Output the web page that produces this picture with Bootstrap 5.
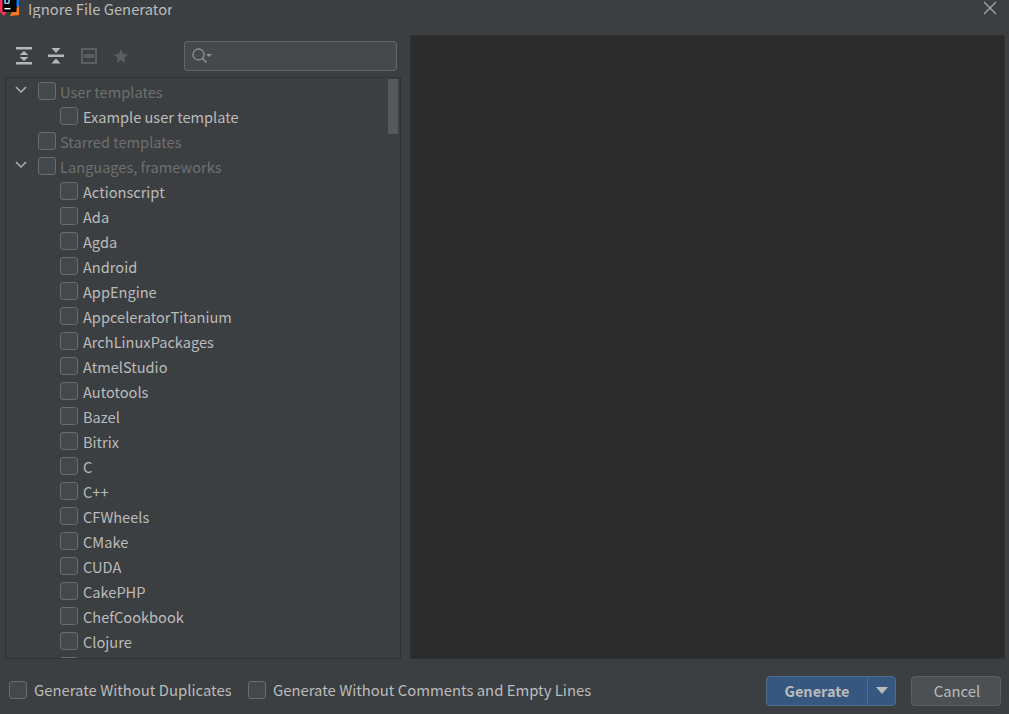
<!DOCTYPE html>
<html lang="en">
<head>
<meta charset="utf-8">
<title>Ignore File Generator</title>
<link href="https://cdn.jsdelivr.net/npm/bootstrap@5.3.0/dist/css/bootstrap.min.css" rel="stylesheet">
<style>
html,body{height:100%;margin:0;overflow:hidden}
body{background:#3c3f41;color:#bbb;font-family:"Noto Sans CJK KR","Noto Sans",sans-serif;font-size:14.6px}
.dlg{width:1009px;height:714px}
.titlebar{height:35px;flex:none;position:relative}
.appicon{margin-top:-4px;flex:none}
.dlgtitle{margin-left:9px;width:144px;overflow:hidden;white-space:nowrap;line-height:18px;font-size:14.8px}
.closex{position:absolute;left:983px;top:1px}
.mainrow{height:624px;flex:none}
.leftpane{width:410px;flex:none}
.tools{height:42px;padding-left:14px}
.tbtn{width:20px;height:20px;margin-right:12px;display:block}
.searchbox{width:213px;height:30px;margin-left:42px;background:#45494a;border:1px solid #646464;border-radius:3px;padding-left:6px}
.treewrap{width:396px;height:582px;margin-left:5px;padding-top:1px;border:1px solid #323232;overflow:hidden;position:relative}
.trow{height:25px;white-space:nowrap;color:#bbb;line-height:25px;position:relative}
.lvl0{padding-left:32px}
.lvl1{padding-left:54px}
.muted{color:#6f6f6f}
.cbx{width:18px;height:18px;border:1px solid #6b6b6b;border-radius:3px;background:#43494a;flex:none;margin-right:5px;display:block;margin-top:-2px}
.lvl0 .cbx{margin-right:4px}
.chev{position:absolute;left:9px;top:7px}
.sbar{position:absolute;left:382px;top:1px;width:10px;height:55px;background:#575859}
.preview{width:595px;height:624px;background:#2b2b2b;border:1px solid #323232}
.foot{height:55px;padding-left:9px;padding-right:8px;padding-top:8px;font-size:14.85px}
.foot .cbx{margin-right:7px}
.chk1{width:197px;overflow:hidden;white-space:nowrap}
.chk2{margin-left:17px}
.gen{margin-left:auto;width:130px;height:30px;background:#365880;border:1px solid #4c708c;border-radius:4px;color:#bbb}
.genlbl{width:100px;text-align:center;font-weight:700;line-height:28px;font-size:14.5px}
.gensep{width:1px;height:28px;background:#4c708c}
.genarr{flex:1}
.cancel{margin-left:15px;width:90px;height:30px;background:#4c5052;border:1px solid #5e6060;border-radius:4px;color:#bbb;text-align:center;line-height:28px;padding-left:2px}
</style>
</head>
<body>
<div class="dlg d-flex flex-column">
  <div class="titlebar d-flex align-items-start">
    <svg class="appicon" width="19" height="21" viewBox="0 0 19 21" aria-hidden="true">
      <path d="M0 4 L7 1 L12 8 L4 20 L0 16Z" fill="#fe315d"/>
      <path d="M7 1 L19 1 L19 12 L12 8Z" fill="#087cfa"/>
      <path d="M12 16 L19 10 L19 19 L10 20Z" fill="#f97a12"/>
      <rect x="2.500" y="0" width="14" height="16" fill="#000"/>
      <rect x="4.500" y="12" width="6" height="1.400" fill="#fff"/>
      <text x="4" y="8" font-size="7" font-weight="700" fill="#fff" font-family="Liberation Sans,sans-serif">IJ</text>
    </svg>
    <div class="dlgtitle">Ignore File Generator</div>
    <svg class="closex" width="14" height="14" viewBox="0 0 14 14" aria-hidden="true"><path d="M1 1L13 13M13 1L1 13" stroke="#a9a9a9" stroke-width="1.200" fill="none"/></svg>
  </div>
  <div class="mainrow d-flex">
    <div class="leftpane d-flex flex-column">
      <div class="tools d-flex align-items-center">
        <svg class="tbtn" viewBox="0 0 20 20" aria-hidden="true"><path d="M2 1h16v2.500H2zM2 16h16v2.500H2zM10 5l4.500 4h-9zM5.500 11h9L10 15z" fill="#b4b6b7"/></svg>
        <svg class="tbtn" viewBox="0 0 20 20" aria-hidden="true"><path d="M2 8.500h16v2.500H2zM5.500 2h9L10 7zM10 12.500l4.500 5h-9z" fill="#b4b6b7"/></svg>
        <svg class="tbtn" viewBox="0 0 20 20" aria-hidden="true"><path d="M4 3h14v14H4zM7 9h8v2H7z" fill="none" stroke="#5c5f61" stroke-width="2"/></svg>
        <svg class="tbtn" viewBox="0 0 20 20" aria-hidden="true"><path d="M11 3l2 4.800 5 .6-3.700 3.300 1 5.100L11 14.300l-4.300 2.500 1-5.100L4 8.400l5-.6z" fill="#5c5f61"/></svg>
        <div class="searchbox d-flex align-items-center">
          <svg width="24" height="20" viewBox="0 0 24 20" aria-hidden="true"><circle cx="7.500" cy="8.500" r="5.500" fill="none" stroke="#8c9092" stroke-width="1.300"/><path d="M11.500 12.500l4 4" stroke="#8c9092" stroke-width="1.600"/><path d="M15 8h6l-3 3z" fill="#8c9092"/></svg>
        </div>
      </div>
      <div class="treewrap">
        <div class="trow lvl0 d-flex align-items-center muted"><svg class="chev" width="12" height="8" viewBox="0 0 12 8" aria-hidden="true"><path d="M1 1l5 5 5-5" fill="none" stroke="#afb1b3" stroke-width="1.500"/></svg><span class="cbx"></span>User templates</div>
        <div class="trow lvl1 d-flex align-items-center"><span class="cbx"></span>Example user template</div>
        <div class="trow lvl0 d-flex align-items-center muted"><span class="cbx"></span>Starred templates</div>
        <div class="trow lvl0 d-flex align-items-center muted"><svg class="chev" width="12" height="8" viewBox="0 0 12 8" aria-hidden="true"><path d="M1 1l5 5 5-5" fill="none" stroke="#afb1b3" stroke-width="1.500"/></svg><span class="cbx"></span>Languages, frameworks</div>
        <div class="trow lvl1 d-flex align-items-center"><span class="cbx"></span>Actionscript</div>
        <div class="trow lvl1 d-flex align-items-center"><span class="cbx"></span>Ada</div>
        <div class="trow lvl1 d-flex align-items-center"><span class="cbx"></span>Agda</div>
        <div class="trow lvl1 d-flex align-items-center"><span class="cbx"></span>Android</div>
        <div class="trow lvl1 d-flex align-items-center"><span class="cbx"></span>AppEngine</div>
        <div class="trow lvl1 d-flex align-items-center"><span class="cbx"></span>AppceleratorTitanium</div>
        <div class="trow lvl1 d-flex align-items-center"><span class="cbx"></span>ArchLinuxPackages</div>
        <div class="trow lvl1 d-flex align-items-center"><span class="cbx"></span>AtmelStudio</div>
        <div class="trow lvl1 d-flex align-items-center"><span class="cbx"></span>Autotools</div>
        <div class="trow lvl1 d-flex align-items-center"><span class="cbx"></span>Bazel</div>
        <div class="trow lvl1 d-flex align-items-center"><span class="cbx"></span>Bitrix</div>
        <div class="trow lvl1 d-flex align-items-center"><span class="cbx"></span>C</div>
        <div class="trow lvl1 d-flex align-items-center"><span class="cbx"></span>C++</div>
        <div class="trow lvl1 d-flex align-items-center"><span class="cbx"></span>CFWheels</div>
        <div class="trow lvl1 d-flex align-items-center"><span class="cbx"></span>CMake</div>
        <div class="trow lvl1 d-flex align-items-center"><span class="cbx"></span>CUDA</div>
        <div class="trow lvl1 d-flex align-items-center"><span class="cbx"></span>CakePHP</div>
        <div class="trow lvl1 d-flex align-items-center"><span class="cbx"></span>ChefCookbook</div>
        <div class="trow lvl1 d-flex align-items-center"><span class="cbx"></span>Clojure</div>
        <div class="trow lvl1 d-flex align-items-center"><span class="cbx"></span></div>
        <div class="sbar"></div>
      </div>
    </div>
    <div class="preview"></div>
  </div>
  <div class="foot d-flex align-items-center">
    <span class="cbx"></span><div class="chk1">Generate Without Duplicates</div>
    <span class="cbx chk2"></span><div>Generate Without Comments and Empty Lines</div>
    <div class="gen d-flex align-items-center">
      <div class="genlbl">Generate</div><div class="gensep"></div>
      <div class="genarr d-flex justify-content-center"><svg width="12" height="7" viewBox="0 0 12 7" aria-hidden="true"><path d="M0 0h12L6 7z" fill="#bbb"/></svg></div>
    </div>
    <div class="cancel">Cancel</div>
  </div>
</div>
<script src="https://cdn.jsdelivr.net/npm/bootstrap@5.3.0/dist/js/bootstrap.bundle.min.js"></script>
</body>
</html>
